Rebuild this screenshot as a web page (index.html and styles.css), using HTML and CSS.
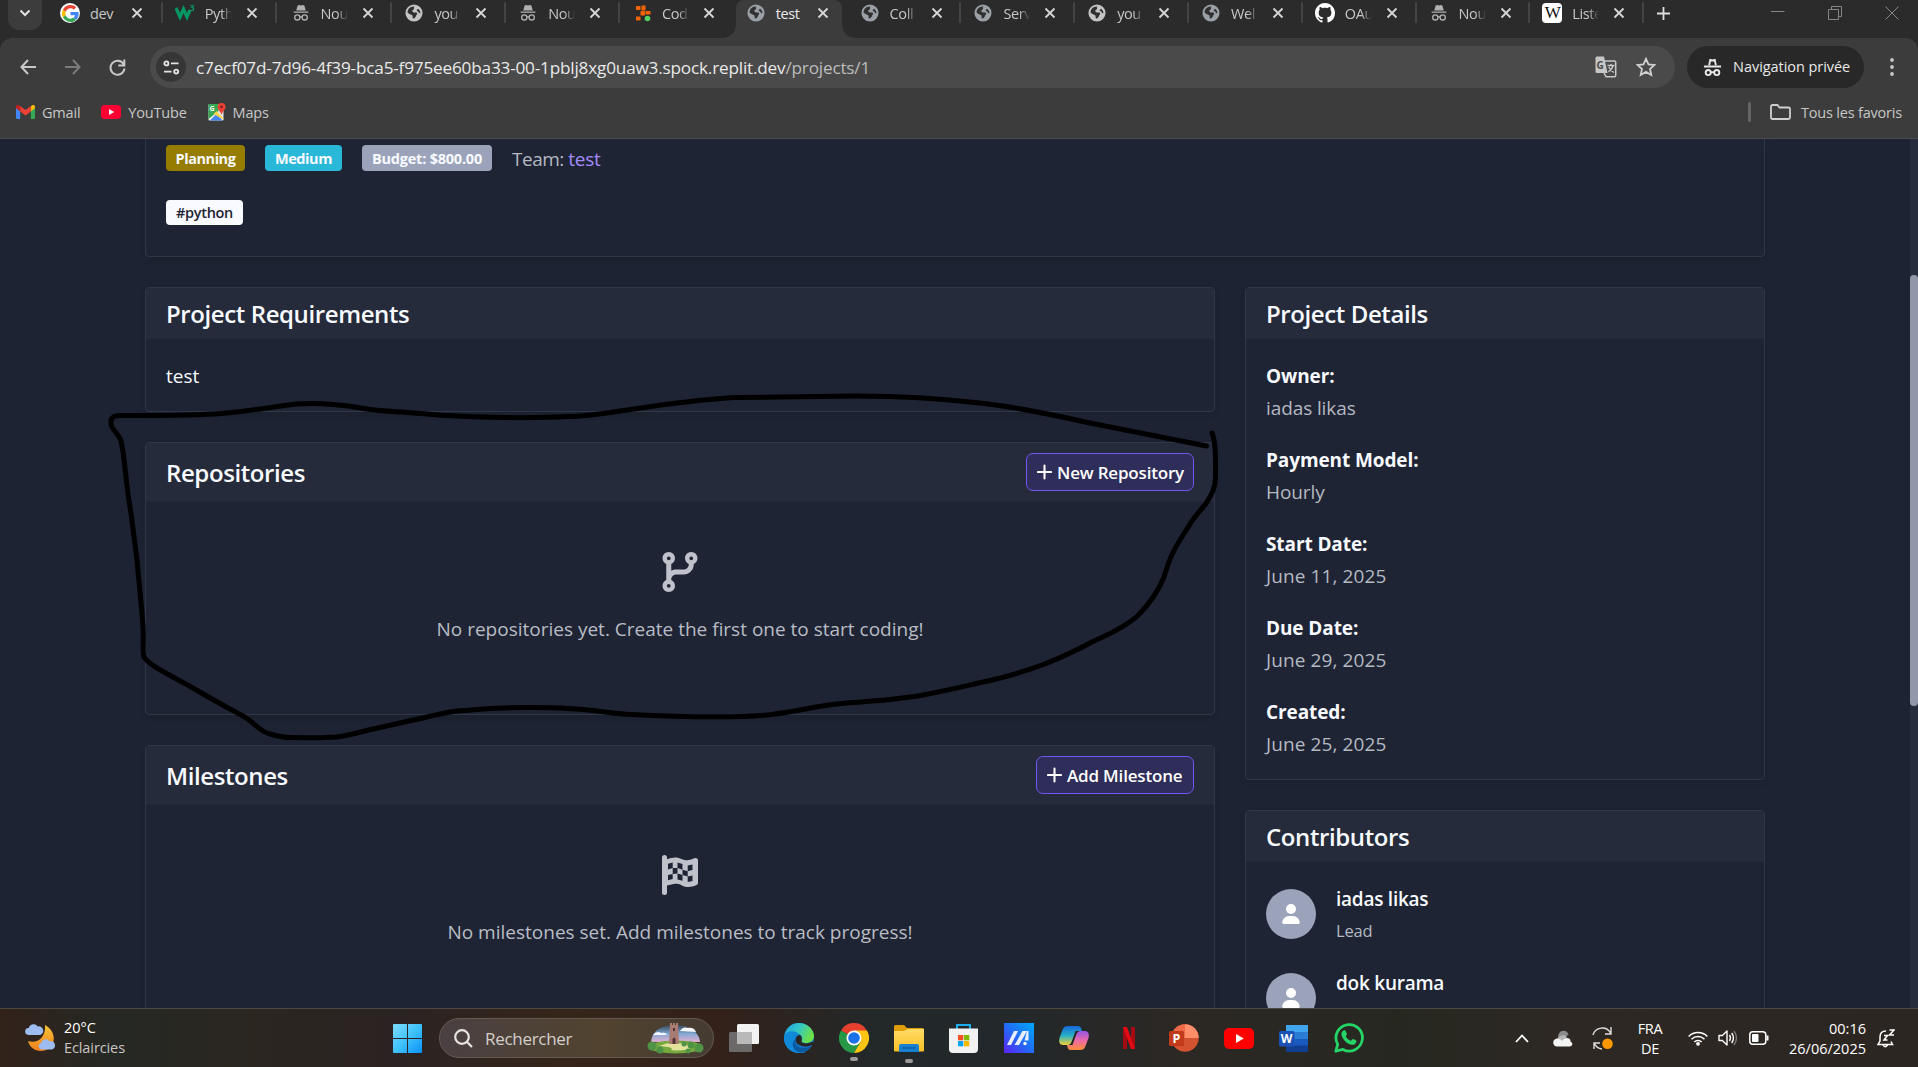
FILE: index.html
```html
<!DOCTYPE html>
<html lang="fr">
<head>
<meta charset="utf-8">
<title>test</title>
<link rel="stylesheet" href="styles.css">
</head>
<body>
<svg class="defs" width="0" height="0">
  <defs>
    <symbol id="x" viewBox="0 0 12 12"><path d="M1.500 1.500l9 9M10.500 1.500l-9 9" fill="none" stroke="currentColor" stroke-width="1.800"/></symbol>
    <symbol id="spy" viewBox="0 0 20 20"><path d="M6.300 1.600 8 1l2 .6L12 1l1.700.6L15.300 7.300H4.700zM1.800 8.300h16.400v1.500H1.800z" fill="currentColor"/><g fill="none" stroke="currentColor" stroke-width="1.500"><circle cx="5.900" cy="14.900" r="2.900"/><circle cx="14.100" cy="14.900" r="2.900"/><path d="M8.800 14.500q1.200-.8 2.400 0"/></g></symbol>
    <symbol id="spy-line" viewBox="0 0 20 20"><path d="M6.500 7.500 7.600 2l2.400.6L12.400 2l1.100 5.500M1 9h18" fill="none" stroke="currentColor" stroke-width="2"/><g fill="none" stroke="currentColor" stroke-width="2"><circle cx="5.500" cy="15.300" r="2.700"/><circle cx="14.500" cy="15.300" r="2.700"/><path d="M8 15h4"/></g></symbol>
    <symbol id="globe" viewBox="0 0 20 20"><circle cx="10" cy="10" r="9.500" fill="currentColor"/><path d="M4.200 5.200C6 3.500 8.500 2.600 10.600 3c-1 .5-1.100 1.500-.3 2.100L9 6.600c-.9.100-1.200.8-.8 1.700l1.500 1.200h2.800c1.300.2 1.300 2 .2 2.700-.6.600-.4 1.800-1.500 2.800-.8.900-1.900 1.500-2.500.9-.5-1 .2-2.200-.7-3.300C6.800 11.500 4.500 11.400 3 9.800c-.3-1.700.2-3.300 1.200-4.600zM14.500 5.200c1.700 1.200 2.800 3 2.600 5-1.200.3-2.100-.5-2.300-1.800l-1.600-.6c-.3-1.300.2-2 1.300-2.600z" class="globe-land"/></symbol>
    <symbol id="plus" viewBox="0 0 16 16"><path d="M8 1v14M1 8h14" fill="none" stroke="currentColor" stroke-width="2.200" stroke-linecap="round"/></symbol>
    <symbol id="user" viewBox="0 0 448 512"><path fill="#fff" d="M224 256A128 128 0 1 0 224 0a128 128 0 1 0 0 256zm-45.700 48C79.800 304 0 383.800 0 482.300C0 498.700 13.300 512 29.700 512H418.300c16.400 0 29.700-13.300 29.700-29.700C448 383.800 368.200 304 269.700 304H178.300z"/></symbol>
  </defs>
</svg>

<div class="screen">
  <header class="chrome">
    <div class="tabstrip">
      <div class="tabsearch"><svg width="12" height="8" viewBox="0 0 12 8"><path d="M1.500 1.500 6 6l4.500-4.500" fill="none" stroke="#e3e3e3" stroke-width="2"/></svg></div>
      <div class="tab full"><span class="fav disc"><svg width="17" height="17" viewBox="0 0 48 48"><path fill="#ea4335" d="M24 9.500c3.500 0 6.700 1.200 9.200 3.600l6.900-6.900C35.900 2.400 30.500 0 24 0 14.600 0 6.500 5.400 2.600 13.200l8 6.200C12.400 13.700 17.700 9.500 24 9.500z"/><path fill="#4285f4" d="M47 24.600c0-1.600-.2-3.100-.4-4.600H24v9h12.900c-.6 3-2.300 5.500-4.800 7.200l7.700 6C44.400 38 47 31.800 47 24.600z"/><path fill="#fbbc05" d="M10.500 28.600A14.500 14.500 0 0 1 10.500 19.400l-8-6.200a24 24 0 0 0 0 21.600z"/><path fill="#34a853" d="M24 48c6.500 0 11.900-2.100 15.900-5.800l-7.700-6C30 37.700 27.200 38.500 24 38.500c-6.300 0-11.600-4.200-13.500-9.900l-8 6.200C6.500 42.600 14.600 48 24 48z"/></svg></span><span class="ttl">dev</span><svg class="cls"><use href="#x"/></svg></div>
      <div class="tab"><span class="fav"><svg width="20" height="20" viewBox="0 0 20 20"><path d="M1 5l4 9 3.500-8 3.500 8 3-7" fill="none" stroke="#059862" stroke-width="3.200"/><text x="15" y="8" font-size="8" font-weight="700" fill="#059862">3</text></svg></span><span class="ttl">Pyth</span><svg class="cls"><use href="#x"/></svg></div>
      <div class="tab shift"><span class="fav"><svg class="ic"><use href="#spy"/></svg></span><span class="ttl">Nou</span><svg class="cls"><use href="#x"/></svg></div>
      <div class="tab"><span class="fav light"><svg class="ic"><use href="#globe"/></svg></span><span class="ttl">you</span><svg class="cls"><use href="#x"/></svg></div>
      <div class="tab"><span class="fav"><svg class="ic"><use href="#spy"/></svg></span><span class="ttl">Nou</span><svg class="cls"><use href="#x"/></svg></div>
      <div class="tab nosep"><span class="fav"><svg width="20" height="20" viewBox="0 0 20 20"><g fill="#f26207"><rect x="4" y="3" width="4.500" height="4" rx=".5"/><rect x="9.500" y="2.500" width="4" height="5" rx=".5"/><rect x="4" y="13.500" width="4.500" height="4" rx=".5"/><rect x="8.500" y="8" width="4.500" height="4.500" rx=".5"/><rect x="13.500" y="8" width="5" height="3.500" rx=".5"/></g><circle cx="15.500" cy="15.500" r="2.800" fill="#57d163"/></svg></span><span class="ttl">Cod</span><svg class="cls"><use href="#x"/></svg></div>
      <div class="tab active full nosep"><span class="fav slate"><svg class="ic"><use href="#globe"/></svg></span><span class="ttl">test</span><svg class="cls"><use href="#x"/></svg></div>
      <div class="tab"><span class="fav slate"><svg class="ic"><use href="#globe"/></svg></span><span class="ttl">Coll</span><svg class="cls"><use href="#x"/></svg></div>
      <div class="tab"><span class="fav slate"><svg class="ic"><use href="#globe"/></svg></span><span class="ttl">Serv</span><svg class="cls"><use href="#x"/></svg></div>
      <div class="tab"><span class="fav light"><svg class="ic"><use href="#globe"/></svg></span><span class="ttl">you</span><svg class="cls"><use href="#x"/></svg></div>
      <div class="tab"><span class="fav slate"><svg class="ic"><use href="#globe"/></svg></span><span class="ttl">Wel</span><svg class="cls"><use href="#x"/></svg></div>
      <div class="tab"><span class="fav"><svg width="20" height="20" viewBox="0 0 16 16"><path fill="#fff" d="M8 0C3.580 0 0 3.580 0 8c0 3.540 2.290 6.530 5.470 7.590.4.070.55-.17.55-.38 0-.19-.01-.82-.01-1.490-2.010.37-2.530-.49-2.690-.94-.09-.23-.48-.94-.82-1.130-.28-.15-.68-.52-.01-.53.63-.01 1.080.58 1.230.82.72 1.210 1.870.87 2.330.66.070-.52.280-.87.510-1.070-1.780-.2-3.640-.89-3.640-3.950 0-.87.310-1.590.82-2.150-.08-.2-.36-1.020.08-2.120 0 0 .67-.21 2.200.82.64-.18 1.320-.27 2-.27s1.360.09 2 .27c1.530-1.040 2.200-.82 2.200-.82.44 1.100.16 1.920.08 2.120.51.56.82 1.270.82 2.150 0 3.070-1.870 3.750-3.650 3.950.29.25.54.73.54 1.480 0 1.070-.01 1.930-.01 2.200 0 .21.15.46.55.38A8.010 8.010 0 0 0 16 8c0-4.420-3.580-8-8-8z"/></svg></span><span class="ttl">OAu</span><svg class="cls"><use href="#x"/></svg></div>
      <div class="tab"><span class="fav"><svg class="ic"><use href="#spy"/></svg></span><span class="ttl">Nou</span><svg class="cls"><use href="#x"/></svg></div>
      <div class="tab"><span class="fav wiki">W</span><span class="ttl">Liste</span><svg class="cls"><use href="#x"/></svg></div>
      <svg class="newtab" width="13" height="13" viewBox="0 0 13 13"><path d="M6.500 0v13M0 6.500h13" stroke="#dedede" stroke-width="1.800"/></svg>
      <div class="winctl">
        <svg width="14" height="14" viewBox="0 0 14 14"><path d="M0 5.500h13.500"/></svg>
        <svg width="14" height="14" viewBox="0 0 14 14"><path d="M.5 3.500h10v10H.5zM3.500 3V.5h10v10H11"/></svg>
        <svg width="14" height="14" viewBox="0 0 14 14"><path d="M.5.5l13 13M13.500.5l-13 13"/></svg>
      </div>
    </div>
    <div class="toolbar">
      <svg class="nav" width="16" height="16" viewBox="0 0 16 16"><path d="M8 1 1.500 8 8 15M1.500 8H16"/></svg>
      <svg class="nav off" width="16" height="16" viewBox="0 0 16 16"><path d="M8 1l6.500 7L8 15M14.500 8H0"/></svg>
      <svg class="nav reload" width="17" height="17" viewBox="0 0 17 17"><path d="M14.500 5A7 7 0 1 0 15.500 9.500M15.300.5v6h-6"/></svg>
      <div class="omni">
        <span class="site"><svg width="17" height="15" viewBox="0 0 17 15"><g fill="none" stroke="#e3e3e3" stroke-width="1.900"><circle cx="3.400" cy="3.400" r="2"/><path d="M8 3.400h7.500M1 11.600h7.500"/><circle cx="13.200" cy="11.600" r="2"/></g></svg></span>
        <span class="url">c7ecf07d-7d96-4f39-bca5-f975ee60ba33-00-1pblj8xg0uaw3.spock.replit.dev<i>/projects/1</i></span>
        <svg class="trans" width="22" height="22" viewBox="0 0 22 22"><path d="M9 5h10.500a1.200 1.200 0 0 1 1.200 1.200V19.500a1.200 1.200 0 0 1-1.200 1.200H11L9 17" fill="none" stroke="#c7c7c7" stroke-width="1.500"/><path d="M2 .5h7l3.500 16.500H2A1.500 1.500 0 0 1 .5 15.500V2A1.500 1.500 0 0 1 2 .5z" fill="#c7c7c7"/><text x="1.600" y="12.500" font-size="10" font-weight="700" fill="#4a4a4a">G</text><path d="M12.500 9.500h7M16 8v1.500M18 9.500c-.6 3-2.500 5-4.600 6.200M13.800 11c1 2.500 3 4.500 5.200 5.500" fill="none" stroke="#c7c7c7" stroke-width="1.300"/></svg>
        <svg width="20" height="20" viewBox="0 0 20 20"><path d="M10 1.800l2.500 5.600 6 .6-4.500 4 1.300 6L10 14.900 4.700 18 6 12 1.500 8l6-.6z" fill="none" stroke="#d0d0d0" stroke-width="1.800"/></svg>
      </div>
      <div class="priv"><svg width="19" height="19"><use href="#spy-line"/></svg><span>Navigation privée</span></div>
      <svg class="dots" width="4" height="18" viewBox="0 0 4 18"><g fill="#c7c7c7"><circle cx="2" cy="2" r="1.900"/><circle cx="2" cy="9" r="1.900"/><circle cx="2" cy="16" r="1.900"/></g></svg>
    </div>
    <div class="bookmarks">
      <svg width="19" height="14" viewBox="0 0 19 14"><path d="M0 2.500V12.800A1.200 1.200 0 0 0 1.200 14h3V4.500z" fill="#4285f4"/><path d="M19 2.500V12.800A1.200 1.200 0 0 1 17.800 14h-3V4.500z" fill="#34a853"/><path d="M14.800 1.500V6.500L19 3.300V2c0-2-2-2.600-3.200-1.500z" fill="#fbbc04"/><path d="M4.200 1 9.500 5l5.300-4v5.500L9.500 10.500 4.200 6.500z" fill="#ea4335"/><path d="M0 2c0-2 2-2.600 3.200-1.500l1 .8v5.200L0 3.300z" fill="#c5221f"/></svg>
      <span class="bm gm">Gmail</span>
      <svg width="20" height="14" viewBox="0 0 20 14"><rect width="20" height="14" rx="3.500" fill="#f03"/><path d="M8 4v6l5.200-3z" fill="#fff"/></svg>
      <span class="bm yt">YouTube</span>
      <svg width="18" height="18" viewBox="0 0 18 18"><path d="M1.500 1h10l4 6v9.500a1 1 0 0 1-1 1h-13a1 1 0 0 1-1-1V2a1 1 0 0 1 1-1z" fill="#e8e8e8"/><path d="M.5 2a1 1 0 0 1 1-1h9v7L.5 16z" fill="#34a853"/><path d="M2 17.500l6.500-6.500 6 6.500z" fill="#4285f4"/><path d="M5.500 11l3-3 7 7.500v1z" fill="#fbd54b"/><text x="1.500" y="7.500" font-size="7" font-weight="700" fill="#fff">G</text><path d="M13.500 0a4 4 0 0 0-4 4c0 3 3 4 4 8 1-4 4-5 4-8a4 4 0 0 0-4-4z" fill="#ea4335"/><circle cx="13.500" cy="4" r="1.400" fill="#8c1d18"/></svg>
      <span class="bm">Maps</span>
      <span class="bmsep"></span>
      <svg width="21" height="16" viewBox="0 0 21 16"><path d="M1 2.500A1.500 1.500 0 0 1 2.500 1h5l2 2.500h9A1.500 1.500 0 0 1 20 5v8.500a1.500 1.500 0 0 1-1.500 1.500h-16A1.500 1.500 0 0 1 1 13.500z" fill="none" stroke="#cfcfcf" stroke-width="1.800"/></svg>
      <span class="bm fv">Tous les favoris</span>
    </div>
  </header>

  <main class="page">
    <div class="container">
      <section class="card summary">
        <div class="meta"><span class="badge b1">Planning</span><span class="badge b2">Medium</span><span class="badge b3">Budget: $800.00</span><span class="team">Team: <a>test</a></span></div>
        <div class="tags"><span class="badge tag">#python</span></div>
      </section>
      <div class="cols">
        <div class="maincol">
          <section class="card"><h5 class="head">Project Requirements</h5><div class="body"><p>test</p></div></section>
          <section class="card">
            <div class="head"><h5>Repositories</h5><button class="btn bt-rep"><svg width="15" height="16"><use href="#plus"/></svg><span>New Repository</span></button></div>
            <div class="empty"><svg width="36" height="40" viewBox="0 0 448 512"><path fill="#bfc2cb" fill-rule="evenodd" d="M160 80c0 32.800-19.700 61-48 73.300v87.800c18.800-10.900 40.700-17.100 64-17.100h96c35.300 0 64-28.700 64-64v-6.700C307.700 141 288 112.800 288 80c0-44.200 35.800-80 80-80s80 35.800 80 80c0 32.800-19.700 61-48 73.300V160c0 70.700-57.300 128-128 128H176c-35.300 0-64 28.700-64 64v6.700c28.300 12.300 48 40.500 48 73.300c0 44.200-35.800 80-80 80s-80-35.800-80-80c0-32.800 19.700-61 48-73.300V153.300C19.700 141 0 112.800 0 80C0 35.800 35.800 0 80 0s80 35.800 80 80zM80 104a24 24 0 1 0 0-48 24 24 0 1 0 0 48zM392 80a24 24 0 1 0-48 0 24 24 0 1 0 48 0zM80 456a24 24 0 1 0 0-48 24 24 0 1 0 0 48z"/></svg><p>No repositories yet. Create the first one to start coding!</p></div>
          </section>
          <section class="card">
            <div class="head"><h5>Milestones</h5><button class="btn bt-mil"><svg width="15" height="16"><use href="#plus"/></svg><span>Add Milestone</span></button></div>
            <div class="empty"><svg width="36" height="40" viewBox="0 0 36 40"><path fill="#bfc2cb" d="M0 2.500a2.500 2.500 0 0 1 5 0V4.200l4-1.100c4.500-1.300 7.500-.5 10.500.8 4.500 2 7.500 1.800 13-.6 1.500-.7 3.500.2 3.500 2v22.500c0 1-.7 2-1.800 2.400-5 2-9.500 2.400-14.200.2-4-1.900-7-1.900-10.500-1L5 30.500v7a2.500 2.500 0 0 1-5 0z"/><path fill="#1e2433" d="M6 8.700l4.700-1.200v5.600L6 14.400zM15.500 7.400l5 1.500v5.800l-5-1.600zM25.700 10.600l4.800-1v5.500l-4.800 1.100zM10.700 13.100l4.800 0v5.300l-4.800.5zM20.500 14.700l5.200 1.500v5.300l-5.200-1.400zM6 20.100l4.700-1.200v5.200L6 25.300zM15.500 18.400l5 1.700v5.600l-5-1.300zM25.700 21.500l4.800-1v5.500l-4.800 1z"/></svg><p>No milestones set. Add milestones to track progress!</p></div>
          </section>
        </div>
        <aside class="sidecol">
          <section class="card"><h5 class="head">Project Details</h5>
            <dl class="body">
              <div><dt>Owner:</dt><dd>iadas likas</dd></div>
              <div><dt>Payment Model:</dt><dd>Hourly</dd></div>
              <div><dt>Start Date:</dt><dd class="date">June 11, 2025</dd></div>
              <div><dt>Due Date:</dt><dd class="date">June 29, 2025</dd></div>
              <div><dt>Created:</dt><dd class="date">June 25, 2025</dd></div>
            </dl>
          </section>
          <section class="card"><h5 class="head">Contributors</h5>
            <div class="body people">
              <div class="person"><span class="avatar"><svg width="18" height="20"><use href="#user"/></svg></span><div><p>iadas likas</p><small>Lead</small></div></div>
              <div class="person"><span class="avatar"><svg width="18" height="20"><use href="#user"/></svg></span><div><p>dok kurama</p><small>&nbsp;</small></div></div>
            </div>
          </section>
        </aside>
      </div>
    </div>
    <div class="scroll"><span></span></div>
  </main>

  <footer class="taskbar">
    <div class="weather">
      <svg width="31" height="29" viewBox="0 0 31 29"><defs><linearGradient id="mn" x2="0" y2="1"><stop stop-color="#f9c53a"/><stop offset="1" stop-color="#ee7d1b"/></linearGradient></defs><path d="M20 2c11 6 12 20 1 25C13 30 5 26 3 18c10 3 18-4 17-16z" fill="url(#mn)"/><path d="M3.500 12a3.500 3.500 0 0 1 .3-7 5 5 0 0 1 9-1.500A4.300 4.300 0 0 1 15 12z" fill="#9dbdf0"/><path d="M16 26.500a3.500 3.500 0 0 1 .3-6.700 4.500 4.500 0 0 1 8.200-1.500 4.200 4.200 0 0 1 2.500 8.200z" fill="#9dbdf0"/></svg>
      <div><p class="w1">20°C</p><p class="w2">Eclaircies</p></div>
    </div>
    <div class="apps">
      <svg width="29" height="29" viewBox="0 0 29 29"><defs><linearGradient id="wn" x2="1" y2="1"><stop stop-color="#7fdcff"/><stop offset=".5" stop-color="#3fc3fc"/><stop offset="1" stop-color="#0a92f5"/></linearGradient></defs><path d="M0 1a1 1 0 0 1 1-1h13v14H0zM15 0h13a1 1 0 0 1 1 1v13H15zM0 15h14v14H1a1 1 0 0 1-1-1zM15 15h14v13a1 1 0 0 1-1 1H15z" fill="url(#wn)"/></svg>
      <div class="search">
        <svg width="19" height="19" viewBox="0 0 19 19"><g fill="none" stroke="#e6e3e1" stroke-width="2.200"><circle cx="8" cy="8" r="6.800"/><path d="M12.800 12.800 18 18"/></g></svg><span>Rechercher</span>
        <svg class="castle" width="58" height="32" viewBox="0 0 58 32"><defs><linearGradient id="sky" x2="0" y2="1"><stop stop-color="#35628c" stop-opacity=".5"/><stop offset=".5" stop-color="#81a9d4"/><stop offset="1" stop-color="#e2afcf"/></linearGradient></defs><path d="M4 20C5 8 15 3 28 3s24 6 25 17z" fill="url(#sky)"/><path d="M6 13q4-5 8-2 5-1 6 2zM33 9q3-5 8-3 6-1 8 4z" fill="#f4f7fd"/><ellipse cx="29" cy="25" rx="27" ry="6.500" fill="#75a83e"/><path d="M12 24q16-7 34 1-10 5-22 3 4-3-12-4z" fill="#e3e29b"/><path d="M22 22l1-21h2v2h1V1h2v2h1V1h2l1 21z" fill="#a87c73"/><path d="M25.500 22v-5q2-3 3 0v5zM26 6h2v3h-2z" fill="#533"/><g fill="#4f9346"><circle cx="5" cy="24" r="4.500"/><circle cx="13" cy="28" r="3.500"/><circle cx="37" cy="22" r="2.500"/><circle cx="44" cy="23" r="3.500"/><circle cx="52" cy="26" r="4.500"/><circle cx="41" cy="29" r="2.500"/></g></svg>
      </div>
      <svg width="30" height="28" viewBox="0 0 30 28"><rect x="8" width="22" height="20" rx="1.500" fill="#f2f2f2"/><rect y="8" width="23" height="20" rx="1.500" fill="#777" opacity=".85"/><path d="M8 8h15v12H8z" fill="#b9b9b9"/></svg>
      <svg width="30" height="30" viewBox="0 0 30 30"><defs><linearGradient id="eg" x2="1" y2=".4"><stop stop-color="#1b9de0"/><stop offset=".5" stop-color="#33c6c8"/><stop offset="1" stop-color="#6be04b"/></linearGradient></defs><circle cx="15" cy="15" r="15" fill="#1272c4"/><path d="M.3 13C2 4 8 0 15 0c9 0 15 7 15 13 0 5-4 7-8 7-3 0-5-1-4.500-2 2-4 0-7-5-7C7 11 2 11 .3 13z" fill="url(#eg)"/><path d="M0 15c0-8 12-9 16-3-4 0-6 3-5 8 1 6 6 9 11 9-10 4-22-2-22-14z" fill="#1089d8"/><path d="M17.500 18c-.5 2 5 4 11 .5L30 21c-5 4-15 3-18-2-1-4 1-7 4-7 2 2 2 4 1.500 6z" fill="#282522"/><path d="M11 17c0 6 5 10 15 7-4 6-11 7-15 3-3-3-3-9 0-10z" fill="#0c59a4"/></svg>
      <span class="run"><svg width="30" height="30" viewBox="0 0 30 30"><path d="M15 15 2 7.500A15 15 0 0 1 28 7.500z" fill="#e8402f"/><path d="M15 15 2 7.500A15 15 0 0 0 15 30l6.500-11z" fill="#279847"/><path d="M15 7.500h13A15 15 0 0 1 15 30l6.500-11z" fill="#fdc413"/><circle cx="15" cy="15" r="7.500" fill="#fff"/><circle cx="15" cy="15" r="5.800" fill="#1b72e8"/></svg></span>
      <span class="run"><svg width="30" height="27" viewBox="0 0 30 27"><defs><linearGradient id="fd" x2="0" y2="1"><stop stop-color="#ffdb67"/><stop offset="1" stop-color="#fbbf23"/></linearGradient></defs><path d="M0 1.500A1.500 1.500 0 0 1 1.500 0H10l3 3h15.500A1.500 1.500 0 0 1 30 4.500V9H0z" fill="#df9d0a"/><path d="M0 6h10l4-2h16v21.500a1 1 0 0 1-1 1H1a1 1 0 0 1-1-1z" fill="url(#fd)"/><path d="M5 27v-6a2 2 0 0 1 2-2h16a2 2 0 0 1 2 2v6z" fill="#1780d0"/><path d="M8 23h14" stroke="#0b569c" stroke-width="1.200"/></svg></span>
      <svg width="30" height="29" viewBox="0 0 30 29"><path d="M8 6V1h13v5" fill="none" stroke="#1bb0ec" stroke-width="2"/><path d="M0 4.500h29V25a4 4 0 0 1-4 4H4a4 4 0 0 1-4-4z" fill="#f2f2f2"/><path d="M9 11h5.300v5.300H9z" fill="#f25022"/><path d="M15 11h5.300v5.300H15z" fill="#7fba00"/><path d="M9 17h5.300v5.300H9z" fill="#00a4ef"/><path d="M15 17h5.300v5.300H15z" fill="#ffb900"/></svg>
      <svg width="30" height="30" viewBox="0 0 30 30"><defs><linearGradient id="as" x1="0" y1="1" x2="1" y2="0"><stop stop-color="#5c22f5"/><stop offset=".5" stop-color="#216df5"/><stop offset="1" stop-color="#00aaff"/></linearGradient></defs><path d="M0 0h30v30H0z" fill="url(#as)"/><path d="M3 22 10 8h4L7 22zM10.500 22 18.500 8h4.500l-8 14zM23 8h1.500v9.500h-4z" fill="#e8eeff"/><circle cx="21" cy="20.500" r="1.700" fill="#fff"/></svg>
      <svg width="30" height="26" viewBox="-.5 0 30 26"><defs><linearGradient id="c1" x2="0" y2="1"><stop stop-color="#1667dc"/><stop offset=".5" stop-color="#25b1c6"/><stop offset="1" stop-color="#f1cf35"/></linearGradient><linearGradient id="c2" x2="0" y2="1"><stop stop-color="#9357e8"/><stop offset=".5" stop-color="#ed6aa8"/><stop offset="1" stop-color="#f98d39"/></linearGradient></defs><path d="M8 1h11c2 0 3 3 3.500 5H16l-4 11c-1 2-2 3-4 3H4c-4 0-5-3-4-7L3 5c1-3 3-4 5-4z" fill="url(#c1)"/><path d="M21 25H11c-2 0-3-2-3.500-5H13l4-11c1-2 2-3 4-3h4c4 0 5 3 4 7l-3 8c-1 3-3 4-5 4z" fill="url(#c2)"/></svg>
      <svg width="30" height="22" viewBox="0 0 30 22"><path d="M9 0h4v22H9zM17 0h4v22h-4z" fill="#a50b12"/><path d="M9 0h4l8 22h-4z" fill="#e50914"/></svg>
      <svg width="30" height="28" viewBox="0 0 30 28"><circle cx="16" cy="14" r="13.700" fill="#d35230"/><path d="M16 .3A13.700 13.700 0 0 1 29.700 14H16z" fill="#ff8f6b"/><path d="M16 .3A13.700 13.700 0 0 0 2.300 14H16z" fill="#ed6c47"/><rect y="7" width="15" height="15" rx="1.500" fill="#c13b1b"/><text x="3.500" y="19" font-size="12.500" font-weight="700" fill="#fff">P</text></svg>
      <svg width="30" height="21" viewBox="0 0 30 21"><rect width="30" height="21" rx="5" fill="#f00"/><path d="M12 6v9l7.800-4.500z" fill="#fff"/></svg>
      <svg width="30" height="27" viewBox="0 0 30 27"><path d="M7 0h22v7H7z" fill="#41a5ee"/><path d="M7 7h22v7H7z" fill="#2b7cd3"/><path d="M7 14h22v7H7z" fill="#185abd"/><path d="M7 20.500h22V27H7z" fill="#103f91"/><rect y="6" width="15.500" height="15.500" rx="1.500" fill="#1a53b5"/><text x="1.800" y="18" font-size="12" font-weight="700" fill="#fff">W</text></svg>
      <svg width="30" height="30" viewBox="0 0 30 30"><path d="M1.800 28.200 3.700 21.300A13.200 13.200 0 1 1 8.900 26.400z" fill="none" stroke="#25d366" stroke-width="2.800" stroke-linejoin="round"/><path d="M9.500 7.500c.8-.5 1.800-.4 2.200.4l1.200 2.800c.3 1-1.200 1.800-1.100 2.600 1 2 2.700 3.500 5 4.500.9.100 1.500-2 2.600-1.700l2.800 1.500c.8.700-.3 3-1.800 3.800-3.500 1.200-7-1-9.500-3.500-2.300-2.500-4-5.300-3.400-7.800.3-1.200 1-2 2-2.600z" fill="#25d366"/></svg>
    </div>
    <div class="tray">
      <svg class="t1" width="14" height="9" viewBox="0 0 14 9"><path d="M1 8l6-6.500L13 8" fill="none" stroke="#fff" stroke-width="1.800"/></svg>
      <svg class="t2" width="20" height="17" viewBox="0 0 20 17"><path d="M5 9C4.500 4 7 .8 10.500.8c3 0 4.500 2 5 4.200z" fill="#8b8b8b"/><path d="M4 9.500C6 5 12 4 14 7l-5 6z" fill="#b5b5b5"/><path d="M4 16.500a4 4 0 0 1-1-7.800c3-.5 4.500 1 6 2.300 3-4.500 9-3.500 8.500.5 3 1.500 2 5-1 5z" fill="#f4f4f4"/></svg>
      <svg class="t3" width="21" height="24" viewBox="0 0 21 24"><path d="M1 9A9.500 9.500 0 0 1 18.500 7M19 1v7h-6M2 23v-6h6M2.500 17.500A9 9 0 0 0 10 23" fill="none" stroke="#ddd" stroke-width="1.400"/><circle cx="15.500" cy="17.800" r="5.300" fill="#ff9800"/></svg>
      <div class="lang"><p>FRA</p><p>DE</p></div>
      <svg class="t4" width="20" height="16" viewBox="0 0 20 16"><g fill="none" stroke="#fff" stroke-width="1.500"><path d="M.7 6.500a13 13 0 0 1 18.600 0M3.500 9.300a9.200 9.200 0 0 1 13 0M6.300 12a5.200 5.200 0 0 1 7.400 0"/></g><circle cx="10" cy="13.800" r="1.900" fill="#fff"/></svg>
      <svg class="t5" width="20" height="18" viewBox="0 0 20 18"><g fill="none" stroke="#fff" stroke-width="1.400" stroke-linejoin="round"><path d="M1 6.500h3.300L9 2v14l-4.700-4.500H1zM11.500 6q2 3 0 6M13.700 4q3.500 5 0 10"/><path d="M16 2q5 7 0 14" stroke="#777"/></g></svg>
      <svg class="t6" width="20" height="14" viewBox="0 0 20 14"><rect x=".8" y=".8" width="16" height="12.400" rx="3" fill="none" stroke="#fff" stroke-width="1.500"/><rect x="3" y="3" width="6.500" height="8" rx="1" fill="#fff"/><path d="M18.500 4.500v5" stroke="#fff" stroke-width="2"/></svg>
      <div class="clock"><p>00:16</p><p>26/06/2025</p></div>
      <svg class="t7" width="18" height="19" viewBox="0 0 18 19"><path d="M9 2C5 2 3 4.500 3 8v4l-2 3.500h14.500L14 12.500M6 16q2 3.500 4.500 0M7 6.500h3.500L7 11h3.500M12.500 1H17l-4.500 5H17" fill="none" stroke="#fff" stroke-width="1.500"/></svg>
    </div>
  </footer>

  <svg class="ink" width="1918" height="1067" viewBox="0 0 1918 1067"><path d="M1206.500 446L1090 423C1045 413 1010 406 980 403C925 396.500 890 396 856 396L734 397.500C660 402 605 416 569 416.500C520 419 460 417 427 414C390 411 375 411 361 408C330 402.500 310 403 296 404C270 407 240 413 214 414C185 415.500 150 415.500 120 415.500C110 415.500 110 422 112 427C115 433 119 434 121 441C125 456 125 480 131 513L137 560C140 594 142 610 143 627C144 645 142 652 144 657C150 667 175 677 198 691C215 701 230 709 243 716C254 722 260 732 270 734C280 737 286 737.500 292 737.500C310 738 325 738 337 737C352 735 367 730 382 727L427 717C450 711.500 455 711 471 710C495 708 510 707.500 529 707.500C550 707.500 560 708 569 708.500C595 710 610 713 631 714.500C670 716.500 720 717 743 716.500C780 716 800 709 829 705C850 702 868 701.500 886 700L918 696C950 690 965 686 988 681C1035 670 1062 658 1094 641C1110 634 1127 626 1139 614.500C1150 603 1158 592 1164 577C1170 557 1172 552 1190 524C1197 513 1203 508 1207 502C1213 493 1215.500 486 1215.500 478V460C1215.500 447 1215 440 1212 433"/></svg>
</div>
</body>
</html>
```
FILE: styles.css
```css
* { box-sizing: border-box; }
body { margin: 0; overflow: hidden; font-family: "Open Sans", "Noto Sans", sans-serif; }
p, h5, dl, dt, dd { margin: 0; }
svg { flex: none; display: block; }
.defs { position: absolute; }
.screen { position: relative; width: 1918px; height: 1067px; display: flex; flex-direction: column; overflow: hidden; background: #1d2332; }

/* browser chrome */
.chrome { flex: none; height: 139px; background: #3c3c3c; border-bottom: 1px solid #4b4b4b; color: #c7c7c7; }
.tabstrip { height: 38px; display: flex; align-items: flex-start; background: #2b2b2b; }
.tabsearch { width: 34px; height: 30px; margin: 0 6px 0 8px; padding-bottom: 4px; border-radius: 0 0 11px 11px; background: #3c3c3c; display: flex; align-items: center; justify-content: center; }
.tab { position: relative; width: 113.800px; height: 38px; padding: 0 18px 12px 13px; display: flex; align-items: center; }
.tab.shift { margin-left: 2px; }
.tab:nth-child(2) { padding-left: 12px; }
.tab::after { content: ""; position: absolute; right: -1px; top: 2px; width: 2px; height: 21px; background: #444; border-radius: 1px; }
.tab.nosep::after { display: none; }
.fav { width: 20px; height: 20px; flex: none; display: flex; align-items: center; justify-content: center; color: #b0b0b0; }
.fav .ic { width: 18px; height: 18px; }
.light { color: #c4c4c4; }
.slate { color: #9aa0a6; }
.globe-land { fill: #303030; }
.disc { border-radius: 50%; background: #fff; }
.wiki { background: #fff; border-radius: 4px; color: #111; font: 17px "Liberation Serif", serif; letter-spacing: -1px; }
.ttl { margin-left: 10px; width: 27px; flex: none; white-space: nowrap; font-size: 14.500px; letter-spacing: -.4px; -webkit-mask-image: linear-gradient(90deg, #000 60%, transparent); mask-image: linear-gradient(90deg, #000 60%, transparent); }
.full .ttl { -webkit-mask-image: none; mask-image: none; }
.cls { width: 12px; height: 12px; margin-left: 14px; color: #d6d6d6; }
.active { z-index: 1; color: #e8e8e8; }
.active::before { content: ""; position: absolute; z-index: -1; inset: 0 5px 0 3px; background: #3c3c3c; border-radius: 8px 8px 0 0; }
.active.nosep::after { display: block; width: auto; height: 13px; top: 25px; left: -10px; right: -8px; z-index: -1; background: radial-gradient(circle at 0 0, transparent 12.500px, #3c3c3c 13px) 0 0 / 13px 13px no-repeat, radial-gradient(circle at 100% 0, transparent 12.500px, #3c3c3c 13px) 100% 0 / 13px 13px no-repeat; }
.newtab { margin: 7px 0 0 14px; }
.winctl { margin: 6px 19px 0 auto; display: flex; gap: 43px; }
.winctl path { fill: none; stroke: #858585; stroke-width: 1; }

.toolbar { height: 58px; display: flex; align-items: center; padding: 0 24px 0 20px; background: radial-gradient(circle at 12px 12px, #3c3c3c 11.500px, #2b2b2b 12px) 0 0 / 12px 12px no-repeat, radial-gradient(circle at 0 12px, #3c3c3c 11.500px, #2b2b2b 12px) 100% 0 / 12px 12px no-repeat; }
.nav { fill: none; stroke: #c9c9c9; stroke-width: 2; margin-right: 29px; }
.nav.off { stroke: #7b7b7b; margin-right: 28px; }
.toolbar .reload { margin-right: 24px; }
.omni { width: 1526px; height: 42px; border-radius: 21px; background: #4a4a4a; display: flex; align-items: center; padding: 0 19px 0 6px; }
.site { width: 30px; height: 30px; border-radius: 50%; background: #363636; display: flex; align-items: center; justify-content: center; }
.url { margin-left: 10px; color: #e9e9e9; font-size: 17.200px; letter-spacing: -.2px; white-space: nowrap; }
.url i { font-style: normal; color: #bdbdbd; }
.trans { margin: 0 19px 0 auto; }
.priv { margin-left: 12px; width: 177px; height: 42px; border-radius: 21px; background: #282828; color: #e8e8e8; display: flex; align-items: center; padding-left: 16px; gap: 11px; font-size: 14.500px; letter-spacing: -.06px; white-space: nowrap; }
.priv span { padding-bottom: 1px; }
.dots { margin-left: 26px; }

.bookmarks { height: 32px; display: flex; align-items: center; padding: 0 16px; font-size: 14.500px; }
.bm { margin-left: 7px; letter-spacing: -.2px; white-space: nowrap; }
.gm { margin-right: 21px; }
.yt { margin-right: 21px; }
.bmsep { width: 3px; height: 20px; margin: 0 19px 0 auto; border-radius: 2px; background: #656565; }
.fv { margin-left: 10px; }

/* project page */
.page { flex: none; height: 869px; overflow: hidden; display: flex; color: #f8faff; font-size: 19px; line-height: 32px; }
.container { width: 1765px; padding-left: 145px; flex: none; }
.card { border: 1px solid #303747; border-radius: 4px; background: #1e2433; box-shadow: 0 3px 6px rgba(0,0,0,.08); }
.summary { height: 118px; border-top: 0; border-radius: 0 0 4px 4px; padding: 6px 20px; }
.meta { display: flex; align-items: center; gap: 20px; height: 26px; white-space: nowrap; }
.badge { height: 26px; line-height: 27px; border-radius: 4px; font-size: 14.500px; font-weight: 700; letter-spacing: -.45px; text-align: center; white-space: nowrap; }
.b1 { width: 79px; background: #967c00; }
.b2 { width: 77px; background: #2ab8d8; }
.b3 { width: 130px; background: #9ba3ba; letter-spacing: -.22px; }
.team { color: #b5b9c2; letter-spacing: -.5px; padding-top: 2px; }
.team a { color: #a48bfa; letter-spacing: -.2px; }
.tags { margin-top: 29px; display: flex; }
.tag { width: 77px; height: 25px; line-height: 25px; background: #f8faff; color: #1e2433; font-weight: 600; letter-spacing: -.3px; }
.cols { margin-top: 30px; display: flex; gap: 30px; align-items: flex-start; }
.maincol { width: 1070px; }
.sidecol { width: 520px; }
.maincol, .sidecol { display: flex; flex-direction: column; gap: 30px; }
.head { padding: 10px 20px; display: flex; justify-content: space-between; align-items: center; background: #252b3a; border-bottom: 1px solid #222837; font-size: 24px; line-height: 30px; font-weight: 600; letter-spacing: -.4px; white-space: nowrap; }
h5.head { padding: 11px 20px 9px; }
h5 { font-size: 24px; font-weight: 600; }
.head h5 { padding-top: 2px; }
.body { padding: 21px 20px 19px; }
.btn { height: 38px; padding: 0 9px 0 10px; display: flex; align-items: center; gap: 5px; border: 1px solid #7357f5; border-radius: 7px; background: #2f2d59; color: #fff; font: 600 17px "Open Sans", sans-serif; letter-spacing: -.18px; white-space: nowrap; }
.bt-rep { width: 168px; }
.bt-mil { width: 158px; }
.empty { padding: 50px 20px; height: 212px; display: flex; flex-direction: column; align-items: center; gap: 21px; color: #b9bcc5; }
.empty p { white-space: nowrap; }
dl div + div { margin-top: 20px; }
dt { font-weight: 700; letter-spacing: -.1px; }
dd { color: #b5b9c2; letter-spacing: -.1px; }
.date { letter-spacing: .1px; }
.people { display: flex; flex-direction: column; gap: 20px; }
.person { display: flex; align-items: center; gap: 20px; height: 64px; }
.person p { font-weight: 600; letter-spacing: -.25px; }
.person small { display: block; font-size: 16.500px; color: #b5b9c2; letter-spacing: -.2px; }
.avatar { width: 50px; height: 50px; margin-top: -2px; border-radius: 50%; background: #9ba3ba; display: flex; align-items: center; justify-content: center; }
.scroll { margin-left: auto; width: 8px; background: #272d3c; padding-top: 136px; }
.scroll span { display: block; height: 431px; border-radius: 4px; background: #9298aa; }

/* taskbar */
.taskbar { flex: none; height: 59px; border-top: 1px solid #4d4842; display: flex; align-items: center; color: #fff; font-size: 14.500px; line-height: 20px; background: linear-gradient(90deg, #32221a 0, #252824 110px, #2b2620 250px, #2b2323 400px, #35251a 560px, #33211a 720px, #232829 870px, #22282b 990px, #2c2824 1180px, #262820 1400px, #2d2823 1550px, #2c2622 1918px); }
.weather { width: 393px; padding: 0 0 1px 25px; display: flex; align-items: center; gap: 8px; }
.w2 { color: #c9c6c3; letter-spacing: -.1px; }
.apps { display: flex; align-items: center; gap: 25px; }
.apps > svg:first-child { margin-right: -8px; }
.search { width: 275px; height: 40px; margin-right: -10px; border-radius: 20px; border: 1px solid #655a50; background: linear-gradient(90deg, #4a4042, #51432f 60%, #453b32); display: flex; align-items: center; padding: 0 8px 0 14px; font-size: 17px; color: #d4cfca; }
.search span { margin-left: 12px; padding-top: 1px; letter-spacing: -.3px; }
.castle { margin-left: auto; }
.run { position: relative; }
.run::after { content: ""; position: absolute; left: 11px; top: 34px; width: 8px; height: 4px; border-radius: 2px; background: #9c9a98; }
.tray { margin-left: auto; padding-right: 23px; display: flex; align-items: center; white-space: nowrap; }
.t2 { margin-left: 24px; }
.t3 { margin-left: 19px; }
.lang { width: 40px; margin: 1px 18px 0 17px; text-align: center; letter-spacing: -.3px; }
.t5 { margin-left: 10px; }
.t6 { margin-left: 11px; }
.clock { width: 97px; margin-top: 1px; text-align: right; letter-spacing: 0; }
.t7 { margin-left: 11px; }

/* freehand stroke over the page */
.ink { position: absolute; inset: 0; pointer-events: none; }
.ink path { fill: none; stroke: #000; stroke-width: 5; stroke-linecap: round; stroke-linejoin: round; }
```
